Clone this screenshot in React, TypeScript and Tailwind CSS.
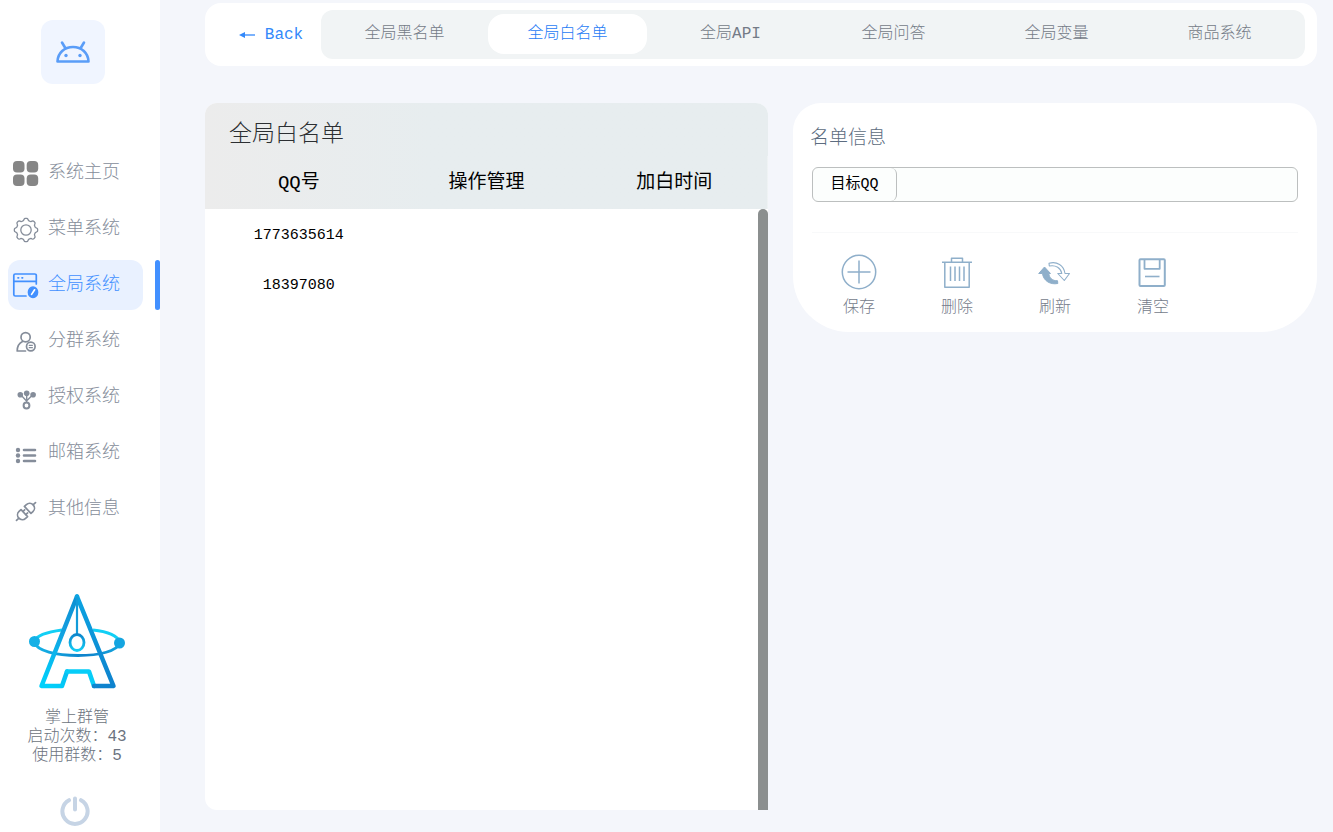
import React, { useState } from "react";

// outline of the settings cog, eight soft teeth
const cogPath =
  Array.from({ length: 96 }, (_, i) => {
    const a = (i / 96) * Math.PI * 2;
    const r = 10.6 + Math.tanh(2 * Math.cos(8 * a)) * 1.1;
    const x = (14 + r * Math.cos(a)).toFixed(2);
    const y = (14 + r * Math.sin(a)).toFixed(2);
    return `${i === 0 ? "M" : "L"}${x} ${y}`;
  }).join(" ") + "Z";

const NavIcon: React.FC<{ name: string }> = ({ name }) => (
  <svg
    viewBox="0 0 26 26"
    className="w-[26px] h-[26px] shrink-0 overflow-visible"
    fill="none"
    stroke="currentColor"
    strokeWidth="1.7"
    strokeLinecap="round"
    strokeLinejoin="round"
    aria-hidden="true"
  >
    {name === "home" && (
      <g fill="#868686" stroke="none">
        <rect x="1" y="1" width="11.5" height="11.5" rx="4" />
        <rect x="14.7" y="1" width="11.5" height="11.5" rx="4" />
        <rect x="1" y="14.5" width="11.5" height="11.5" rx="4" />
        <rect x="14.7" y="14.5" width="11.5" height="11.5" rx="4" />
      </g>
    )}
    {name === "menu" && (
      <g strokeWidth="1.3">
        <path d={cogPath} />
        <circle cx="14" cy="14" r="5.2" />
      </g>
    )}
    {name === "global" && (
      <>
        <path d="M24.3 12V3.5a1.5 1.5 0 0 0-1.5-1.5H3.3a1.5 1.5 0 0 0-1.5 1.5v19A1.5 1.5 0 0 0 3.3 24H14" />
        <path d="M2 9.3h22" />
        <path d="M6 5.8h.6M10 5.8h.6" />
        <ellipse cx="21" cy="20.2" rx="4.5" ry="5.2" fill="currentColor" />
        <path d="M19.6 22.4l3-4.6" stroke="#fff" />
      </>
    )}
    {name === "group" && (
      <>
        <circle cx="13.6" cy="9.2" r="4.6" />
        <path d="M13.5 23H5.2c0-4.5 1.5-7.5 5.3-9.4" />
        <circle cx="18.8" cy="18.5" r="4.3" />
        <path d="M17.2 17.3h3.2M17.2 19.7h3.2" strokeWidth="1.2" />
      </>
    )}
    {name === "auth" && (
      <>
        <path d="M8.5 10.5l6 6.5 6.5-6.5M14.7 9v9" strokeWidth="1.4" />
        <g fill="currentColor" stroke="none">
          <circle cx="8.3" cy="10.7" r="2.8" />
          <circle cx="14.7" cy="9.2" r="2.8" />
          <circle cx="21.1" cy="10.7" r="2.8" />
        </g>
        <circle cx="14.5" cy="21.5" r="2.9" strokeWidth="2" />
      </>
    )}
    {name === "mail" && (
      <>
        <path d="M12 10h11M12 15.5h11M12 21h11" strokeWidth="2.6" />
        <g fill="currentColor" stroke="none">
          <circle cx="6" cy="10" r="2.2" />
          <circle cx="6" cy="15.5" r="2.2" />
          <circle cx="6" cy="21" r="2.2" />
        </g>
      </>
    )}
    {name === "other" && (
      <g transform="translate(14 15.5) rotate(-43)">
        <path d="M-2.3-4.8H-5A4.8 4.8 0 0 0-5 4.8h2.7z" />
        <path d="M2.3-4.8H5A4.8 4.8 0 0 1 5 4.8H2.3z" />
        <path d="M-13 0h3M10 0h3M-2-2.2H.2M-2 2.2H.2" />
      </g>
    )}
  </svg>
);

const ActionIcon: React.FC<{ name: string }> = ({ name }) => (
  <svg
    viewBox="0 0 36 36"
    className="w-9 h-9 text-[#8fafca]"
    fill="none"
    stroke="currentColor"
    strokeWidth="1.5"
    strokeLinejoin="round"
    aria-hidden="true"
  >
    {name === "save" && (
      <>
        <circle cx="18" cy="18" r="16.7" />
        <path d="M18 6.5v23M6.5 18h23" />
      </>
    )}
    {name === "delete" && (
      <>
        <path d="M3 8.3h30M5.8 8.5v24.7h24.4V8.5M12.5 8V4.2h11V8" />
        <path d="M11.5 12.5V27M16 12.5V27M20.5 12.5V27M25 12.5V27" />
      </>
    )}
    {name === "refresh" && (
      <>
        <path
          d="M7.500 13L1.700 19.500h3.800c.8 7 7.500 11.500 15.300 10l-.3-2.800c-5 .3-8.200-2.700-8.700-7.200h1.700z"
          fill="currentColor"
          strokeWidth="1"
        />
        <path
          d="M12 9.300c8-2.300 14.800 2.200 16 10.200h4.500L27.300 26.500l-6.500-7h4c-1-5.500-5.800-8.800-12.500-7.500z"
          strokeWidth="1.100"
        />
      </>
    )}
    {name === "clear" && (
      <>
        <rect x="4.500" y="5.200" width="25.300" height="26.800" rx="1" strokeWidth="2" />
        <path d="M9.500 5.500v9.300h15.200V5.500" strokeWidth="1.800" />
        <path d="M10 22.500h14.500" strokeWidth="1.600" />
      </>
    )}
  </svg>
);

const BrandLogo: React.FC = () => (
  <svg viewBox="0 0 98 98" className="w-[98px] h-[98px]" fill="none" aria-hidden="true">
    <defs>
      <linearGradient id="body" gradientUnits="userSpaceOnUse" x1="15" y1="90" x2="60" y2="20">
        <stop offset="0" stopColor="#00d0fb" />
        <stop offset="0.7" stopColor="#149dde" />
        <stop offset="1" stopColor="#0c93d5" />
      </linearGradient>
      <linearGradient id="leg" gradientUnits="userSpaceOnUse" x1="49" y1="2" x2="86" y2="93">
        <stop offset="0" stopColor="#0ba4e2" />
        <stop offset="1" stopColor="#0e82cd" />
      </linearGradient>
      <linearGradient id="orbit" gradientUnits="userSpaceOnUse" x1="6" y1="50" x2="92" y2="50">
        <stop offset="0" stopColor="#14b5e8" />
        <stop offset="0.6" stopColor="#0e82cb" />
        <stop offset="1" stopColor="#14a5de" />
      </linearGradient>
      <linearGradient id="ring" x1="0" y1="0" x2="0" y2="1">
        <stop offset="0" stopColor="#0d86cc" />
        <stop offset="1" stopColor="#12cdf6" />
      </linearGradient>
    </defs>
    <path d="M6 48c3-6 13-9 28-11" stroke="#12cff5" strokeWidth="3" />
    <path d="M65 37c14 1.5 24 5 27 12" stroke="#12cff5" strokeWidth="3" />
    <path d="M6 49c3 9 22 13.5 44 13.5S89 58 92 50" stroke="url(#orbit)" strokeWidth="2.8" />
    <g strokeWidth="4.5" strokeLinejoin="round" strokeLinecap="round">
      <path d="M49 3.5L13.5 93H34L39 78.5" stroke="url(#body)" />
      <path d="M39 78.5H61L66 93" stroke="#06cdf8" />
      <path d="M49 3.5L85.500 93H66" stroke="url(#leg)" />
    </g>
    <path d="M49 4v37" stroke="#129bd9" strokeWidth="2.2" />
    <ellipse cx="49" cy="49.5" rx="7" ry="8" stroke="url(#ring)" strokeWidth="2.8" />
    <circle cx="6.5" cy="48.5" r="5.5" fill="#14b0e6" />
    <circle cx="91.5" cy="50" r="5.5" fill="#14a5e0" />
  </svg>
);

const navItems = [
  { icon: "home", label: "系统主页" },
  { icon: "menu", label: "菜单系统" },
  { icon: "global", label: "全局系统" },
  { icon: "group", label: "分群系统" },
  { icon: "auth", label: "授权系统" },
  { icon: "mail", label: "邮箱系统" },
  { icon: "other", label: "其他信息" },
];

const tabs = ["全局黑名单", "全局白名单", "全局API", "全局问答", "全局变量", "商品系统"];

const actions = [
  { icon: "save", label: "保存" },
  { icon: "delete", label: "删除" },
  { icon: "refresh", label: "刷新" },
  { icon: "clear", label: "清空" },
];

const whitelist = ["1773635614", "18397080"];

const Sidebar: React.FC = () => {
  const [active, setActive] = useState("global");

  return (
    <aside className="w-40 shrink-0 bg-white flex flex-col pt-5 pb-1.5">
      <div className="w-16 h-16 ml-[41px] rounded-xl bg-[#f0f5ff] flex items-center justify-center">
        <svg
          viewBox="0 0 36 24"
          className="w-9 h-6"
          fill="none"
          stroke="#5a9df8"
          strokeWidth="2.6"
          strokeLinecap="round"
          strokeLinejoin="round"
          aria-hidden="true"
        >
          <path d="M2.500 21.500C2.800 13 9.500 7 18 7S33.200 13 33.500 21.500z" />
          <path d="M7 2.500l3 5M29 2.500l-3 5" />
          <circle cx="11" cy="15.5" r="1.7" fill="#5a9df8" stroke="none" />
          <circle cx="25" cy="15.5" r="1.7" fill="#5a9df8" stroke="none" />
        </svg>
      </div>

      <nav className="mt-16 flex flex-col gap-1.5">
        {navItems.map((item) => (
          <div key={item.icon} className="flex justify-between pl-2">
            <button
              onClick={() => setActive(item.icon)}
              className={`w-[135px] h-[50px] pl-1 flex items-center gap-2.5 rounded-xl text-lg ${
                active === item.icon
                  ? "bg-[#e9f1ff] text-[#4290ff]"
                  : "text-[#858d9a]"
              }`}
            >
              <NavIcon name={item.icon} />
              <span className="whitespace-nowrap">{item.label}</span>
            </button>
            {active === item.icon && (
              <span className="w-[5px] rounded-full bg-[#4290ff]" />
            )}
          </div>
        ))}
      </nav>

      <div className="mt-auto pt-4 pr-1.5 flex flex-col items-center">
        <BrandLogo />
        <div className="mt-[18px] text-base leading-[19px] text-center text-[#6c7380]">
          <p>掌上群管</p>
          <p>启动次数：43</p>
          <p>使用群数：5</p>
        </div>
        <button aria-label="退出" className="mt-[30px] mr-1">
          <svg
            viewBox="0 0 30 30"
            className="w-[30px] h-[30px]"
            fill="none"
            stroke="#c6d4e5"
            strokeWidth="4"
            strokeLinecap="round"
            aria-hidden="true"
          >
            <path d="M9 4.2a12.600 12.600 0 1 0 12 0M15 2.500v11" />
          </svg>
        </button>
      </div>
    </aside>
  );
};

const App: React.FC = () => {
  const [tab, setTab] = useState("全局白名单");
  const [target, setTarget] = useState("");

  return (
    <div className="min-h-screen flex bg-[#f4f6fb] font-light font-['Liberation_Mono','Noto_Sans_CJK_SC',monospace]">
      <Sidebar />

      <main className="flex-1 min-w-0 flex flex-col pt-[3px] pr-4 pb-[22px] pl-[45px]">
        {/* Top bar */}
        <header className="bg-white rounded-2xl py-[7px] pr-3 flex">
          <button className="w-[116px] shrink-0 flex items-center justify-center gap-2.5 pl-4 text-base text-[#3389fa]">
            <svg
              viewBox="0 0 16 8"
              className="w-4 h-2"
              fill="none"
              stroke="currentColor"
              strokeWidth="1.3"
              aria-hidden="true"
            >
              <path d="M3 4h13" />
              <path d="M0 4l6-3v6z" fill="currentColor" stroke="none" />
            </svg>
            Back
          </button>
          <div className="flex-1 grid grid-cols-6 gap-1 rounded-xl bg-[#f1f4f5] pt-1 pr-1.5 pb-[5px] pl-1">
            {tabs.map((t) => (
              <button
                key={t}
                onClick={() => setTab(t)}
                className={`h-10 rounded-2xl text-base whitespace-nowrap ${
                  tab === t ? "bg-white text-[#1f7cf5]" : "text-[#747b87]"
                }`}
              >
                {t}
              </button>
            ))}
          </div>
        </header>

        <div className="mt-[37px] flex-1 grid grid-cols-[563fr_524fr] gap-[25px]">
          {/* Whitelist table */}
          <section className="relative bg-white rounded-xl rounded-br-none overflow-hidden">
            <table className="w-full table-fixed">
              <caption className="h-[53px] pt-3.5 pl-6 text-left text-[23px] leading-9 text-[#2c2f32] bg-linear-to-r from-[#ececec] to-[#e7edef] to-40%">
                全局白名单
              </caption>
              <thead className="bg-linear-to-r from-[#ececec] to-[#e7edef] to-40%">
                <tr className="h-[53px] text-[19px] leading-6 text-black">
                  <th className="font-normal">QQ号</th>
                  <th className="font-normal">操作管理</th>
                  <th className="font-normal">加白时间</th>
                </tr>
              </thead>
              <tbody>
                {whitelist.map((qq) => (
                  <tr key={qq} className="h-[50px] text-[15px] text-black text-center">
                    <td className="pt-1">{qq}</td>
                    <td></td>
                    <td></td>
                  </tr>
                ))}
              </tbody>
            </table>
            <div className="absolute top-[106px] right-0 bottom-0 w-2.5 rounded-t-full bg-[#8b8f8f]" />
          </section>

          {/* List info */}
          <section className="self-start bg-white rounded-t-[28px] rounded-b-[56px] pt-[22px] pb-3 px-[17px]">
            <h2 className="text-[19px] leading-7 text-[#5c6c80]">名单信息</h2>
            <div className="mt-3.5 mx-0.5 h-[35px] flex border border-[#bcbfbf] rounded-md bg-[#fcfefd]">
              <label
                htmlFor="target"
                className="w-[84px] shrink-0 pt-0.5 flex items-center justify-center border-r border-[#bcbfbf] rounded-md text-[15px] font-normal text-black"
              >
                目标QQ
              </label>
              <input
                id="target"
                value={target}
                onChange={(e) => setTarget(e.target.value)}
                className="flex-1 min-w-0 px-2 text-[15px] outline-none"
              />
            </div>
            <hr className="mt-[30px] mx-0.5 border-[#f8f9fa]" />
            <div className="mt-[21px] flex">
              {actions.map((a) => (
                <button
                  key={a.icon}
                  className="w-[98px] flex flex-col items-center gap-1.5 text-base leading-6 text-[#747b8a]"
                >
                  <ActionIcon name={a.icon} />
                  {a.label}
                </button>
              ))}
            </div>
          </section>
        </div>
      </main>
    </div>
  );
};

export default App;
